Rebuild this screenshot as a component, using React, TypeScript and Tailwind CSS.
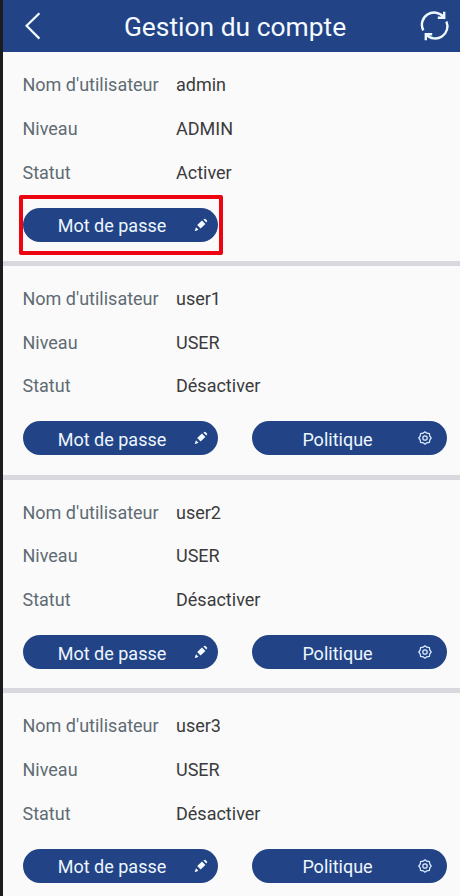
import type { ReactNode } from 'react'
import clsx from 'clsx'

type Account = {
    name: string
    level: string
    status: string
    highlighted?: boolean
    hasPolicy?: boolean
}

const accounts: Account[] = [
    { name: 'admin', level: 'ADMIN', status: 'Activer', highlighted: true },
    { name: 'user1', level: 'USER', status: 'Désactiver', hasPolicy: true },
    { name: 'user2', level: 'USER', status: 'Désactiver', hasPolicy: true },
    { name: 'user3', level: 'USER', status: 'Désactiver', hasPolicy: true },
]

function BackIcon() {
    return (
        <svg width="18" height="28" viewBox="0 0 18 28" fill="none" stroke="#f4faff" strokeWidth="2.2">
            <path d="M15.4 1.2 2.6 13.8 15.4 26.6" />
        </svg>
    )
}

function RefreshIcon() {
    return (
        <svg width="30" height="30" viewBox="0 0 30 30" fill="none" stroke="#eef8ff" strokeWidth="2.4">
            <path d="M3.3 19.4A12.2 12.2 0 0 1 23.7 6.2" />
            <path d="M24.2 .7V6.8H17.8" />
            <path d="M26.4 10.4A12.2 12.2 0 0 1 6.3 23.6" />
            <path d="M5.8 29.3V23.2H12.2" />
        </svg>
    )
}

function PencilIcon() {
    return (
        <svg width="14" height="14" viewBox="0 0 14 14" fill="#f4faff">
            <path d="M8 2.5 11.4 5.9 6.6 10.5 3.2 7.1Z" />
            <path d="M9.4 1.6 10.4.9Q11 .4 11.5.9L13 2.4Q13.5 3 13 3.5L12.3 4.5Z" />
            <path d="M2 9.3 4.5 11.8 1.4 12.9Q.6 13.1.9 12.4Z" />
        </svg>
    )
}

function GearIcon() {
    return (
        <svg width="14" height="14" viewBox="0 0 14 14" fill="none" stroke="#dcecff" strokeWidth="1.25" strokeLinejoin="round">
            <path d="M7 .8 8.8 2.2 11.4 2.6 11.8 5.2 13.2 7 11.8 8.8 11.4 11.4 8.8 11.8 7 13.2 5.2 11.8 2.6 11.4 2.2 8.8 .8 7 2.2 5.2 2.6 2.6 5.2 2.2Z" />
            <circle cx="7" cy="7" r="2.2" />
        </svg>
    )
}

function PillButton({ label, icon, className }: { label: string; icon: ReactNode; className?: string }) {
    return (
        <button type="button" className={clsx('flex h-[34px] w-[195px] items-center rounded-full bg-[#224486] text-[18px] text-[#eef6ff]', className)}>
            <span className="flex-1 pt-[2px] text-center">{label}</span>
            {icon}
        </button>
    )
}

function Row({ label, value }: { label: string; value: string }) {
    return (
        <div className="flex h-[43.75px] items-center">
            <span className="w-[153.5px] text-[#5f6b73]">{label}</span>
            <span className="text-[#3b3b3d]">{value}</span>
        </div>
    )
}

function AccountCard({ account }: { account: Account }) {
    return (
        <section className="h-[213.75px] shrink-0 border-b-[5px] border-[#d8d8de] pt-[10.8px] pl-[19.5px] text-[18px]">
            <Row label="Nom d'utilisateur" value={account.name} />
            <Row label="Niveau" value={account.level} />
            <Row label="Statut" value={account.status} />
            <div className="mt-[13.6px] flex gap-[34px]">
                <div className={account.highlighted ? 'relative' : ''}>
                    <PillButton label="Mot de passe" icon={<PencilIcon />} className="pr-[10px] pl-[8px]" />
                    {account.highlighted && (
                        <div className="absolute -top-[13px] -right-[5px] -bottom-[13.5px] -left-[4px] rounded-[2px] border-4 border-[#ec0410]" />
                    )}
                </div>
                {account.hasPolicy && <PillButton label="Politique" icon={<GearIcon />} className="pr-[15px] pl-[6px]" />}
            </div>
        </section>
    )
}

export default function App() {
    return (
        <div className="flex h-[896px] w-[460px] flex-col overflow-hidden border-l-[3px] border-[#1c1b1e] bg-[#fafafa] font-['Roboto',sans-serif]">
            <header className="flex h-[52px] shrink-0 items-center bg-[#224486] pr-[10px] pl-[21px]">
                <BackIcon />
                <h1 className="flex-1 pt-[4px] pl-[8px] text-center text-[26.4px] text-[#f4faff]">Gestion du compte</h1>
                <RefreshIcon />
            </header>
            {accounts.map((account) => (
                <AccountCard key={account.name} account={account} />
            ))}
        </div>
    )
}
